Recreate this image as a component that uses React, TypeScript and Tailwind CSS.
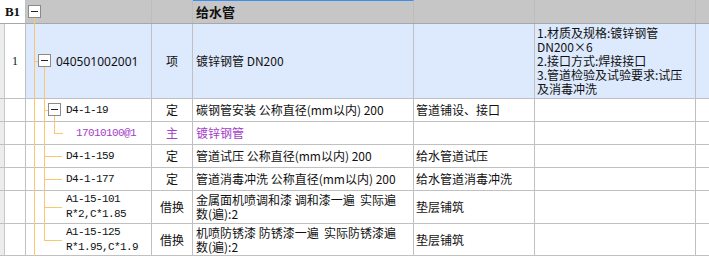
import React from "react";

const LINE = "bg-[#fcc56f]";

type Row = {
  no?: string;
  code: string[];
  codeClass: string;
  unit: string;
  name: string[];
  feature: string[];
  note: string[];
  height: string;
  purple?: boolean;
  blue?: boolean;
  tree: React.ReactNode;
};

const Box = ({ left, top }: { left: number; top?: number }) => (
  <div
    className="absolute w-[13px] h-[13px] border border-[#8a8a8a] bg-white flex items-center justify-center"
    style={{ left, top: top ?? "calc(50% - 7px)" }}
  >
    <div className="w-[7px] h-[1px] bg-[#222]" />
  </div>
);

const VFull = ({ left }: { left: number }) => (
  <div className={`absolute top-0 -bottom-px w-px ${LINE}`} style={{ left }} />
);
const VTop = ({ left }: { left: number }) => (
  <div className={`absolute top-0 h-1/2 w-px ${LINE}`} style={{ left }} />
);
const H = ({ left, width }: { left: number; width: number }) => (
  <div className={`absolute top-1/2 h-px ${LINE}`} style={{ left, width }} />
);

const leaf = (last?: boolean) => (
  <>
    <VFull left={8} />
    {last ? <VTop left={18} /> : <VFull left={18} />}
    <H left={18} width={18} />
  </>
);

const mono = "font-['Liberation_Mono',monospace] text-[11px] tracking-[-0.6px]";

const rows: Row[] = [
  {
    no: "1",
    code: ["040501002001"],
    codeClass: "pl-[30px] font-['Noto_Sans',sans-serif] text-[12px]",
    unit: "项",
    name: ["镀锌钢管 DN200"],
    feature: [],
    note: ["1.材质及规格:镀锌钢管", "DN200×6", "2.接口方式:焊接接口", "3.管道检验及试验要求:试压", "及消毒冲洗"],
    height: "h-[75px]",
    blue: true,
    tree: (
      <>
        <VFull left={8} />
        <H left={8} width={5} />
        <Box left={12} />
        <div className={`absolute top-[43px] -bottom-px w-px ${LINE}`} style={{ left: 18 }} />
      </>
    ),
  },
  {
    code: ["D4-1-19"],
    codeClass: `pl-[40px] ${mono}`,
    unit: "定",
    name: ["碳钢管安装 公称直径(mm以内) 200"],
    feature: ["管道铺设、接口"],
    note: [],
    height: "h-[23px]",
    tree: (
      <>
        <VFull left={8} />
        <VFull left={18} />
        <H left={18} width={5} />
        <Box left={22} />
        <div className={`absolute top-[17px] -bottom-px w-px ${LINE}`} style={{ left: 28 }} />
      </>
    ),
  },
  {
    code: ["17010100@1"],
    codeClass: `pl-[50px] ${mono}`,
    unit: "主",
    name: ["镀锌钢管"],
    feature: [],
    note: [],
    height: "h-[23px]",
    purple: true,
    tree: (
      <>
        <VFull left={8} />
        <VFull left={18} />
        <VTop left={28} />
        <H left={28} width={9} />
      </>
    ),
  },
  {
    code: ["D4-1-159"],
    codeClass: `pl-[40px] ${mono}`,
    unit: "定",
    name: ["管道试压 公称直径(mm以内) 200"],
    feature: ["给水管道试压"],
    note: [],
    height: "h-[23px]",
    tree: leaf(),
  },
  {
    code: ["D4-1-177"],
    codeClass: `pl-[40px] ${mono}`,
    unit: "定",
    name: ["管道消毒冲洗 公称直径(mm以内) 200"],
    feature: ["给水管道消毒冲洗"],
    note: [],
    height: "h-[23px]",
    tree: leaf(),
  },
  {
    code: ["A1-15-101", "R*2,C*1.85"],
    codeClass: `pl-[40px] ${mono}`,
    unit: "借换",
    name: ["金属面机喷调和漆 调和漆一遍  实际遍", "数(遍):2"],
    feature: ["垫层铺筑"],
    note: [],
    height: "h-[33px]",
    tree: leaf(),
  },
  {
    code: ["A1-15-125", "R*1.95,C*1.9"],
    codeClass: `pl-[40px] ${mono}`,
    unit: "借换",
    name: ["机喷防锈漆 防锈漆一遍  实际防锈漆遍", "数(遍):2"],
    feature: ["垫层铺筑"],
    note: [],
    height: "h-[32px]",
    tree: leaf(true),
  },
];

const cell = "border-r border-[#c0c0c0] h-full flex items-center";

export default function App() {
  return (
    <div className="w-[709px] h-[257px] bg-white overflow-hidden font-['Noto_Sans_CJK_SC',sans-serif] text-[12px] text-[#111] leading-[14px]">
      {/* header row */}
      <div className="flex h-[24px] border-b border-[#a8a8a8] bg-[#c6c6c6]">
        <div className={`${cell} w-[26px] bg-white justify-center font-['Liberation_Serif',serif] font-bold text-[13px]`}>
          B1
        </div>
        <div className="relative w-[126px] h-full border-r border-[#bdbdbd]">
          <Box left={2} top={5} />
          <div className={`absolute top-[18px] -bottom-px w-px ${LINE}`} style={{ left: 8 }} />
        </div>
        <div className="w-[41px] h-full border-r border-[#bdbdbd]" />
        <div className="w-[221px] h-full border-r border-[#bdbdbd] border-t border-t-[#3d8ef0] flex items-center pl-[3px] font-bold text-[13px]">
          给水管
        </div>
        <div className="w-[121px] h-full border-r border-[#bdbdbd]" />
        <div className="w-[161px] h-full border-r border-[#bdbdbd]" />
        <div className="flex-1 h-full" />
      </div>

      {rows.map((r, i) => {
        const color = r.purple ? "text-[#a33dca]" : "";
        const bg = r.blue ? "bg-[#dde9fc]" : "bg-white";
        return (
          <div key={i} className={`flex ${r.height} border-b border-[#c0c0c0] ${bg}`}>
            <div className="flex w-[26px] h-full bg-white border-r border-[#c0c0c0]">
              <div className="w-[5px] h-full bg-[#ececec] border-r border-[#c8c8c8]" />
              <div className="flex-1 flex items-center justify-center font-['Liberation_Serif',serif] text-[12px]">
                {r.no}
              </div>
            </div>
            <div className={`relative w-[126px] ${cell} ${color}`}>
              {r.tree}
              <div className={`${r.codeClass} leading-[15px] whitespace-pre`}>
                {r.code.map((c, j) => (
                  <div key={j}>{c}</div>
                ))}
              </div>
            </div>
            <div className={`w-[41px] ${cell} justify-center ${color}`}>{r.unit}</div>
            <div className={`w-[221px] ${cell} pl-[3px] ${color}`}>
              <div className="whitespace-pre leading-[14px]">
                {r.name.map((n, j) => (
                  <div key={j}>{n}</div>
                ))}
              </div>
            </div>
            <div className={`w-[121px] ${cell} pl-[2px]`}>
              <div className="whitespace-pre">{r.feature.join("\n")}</div>
            </div>
            <div className={`w-[161px] ${cell} pl-[2px]`}>
              <div className="whitespace-pre leading-[14px]">
                {r.note.map((n, j) => (
                  <div key={j}>{n}</div>
                ))}
              </div>
            </div>
            <div className="flex-1 h-full" />
          </div>
        );
      })}
    </div>
  );
}
